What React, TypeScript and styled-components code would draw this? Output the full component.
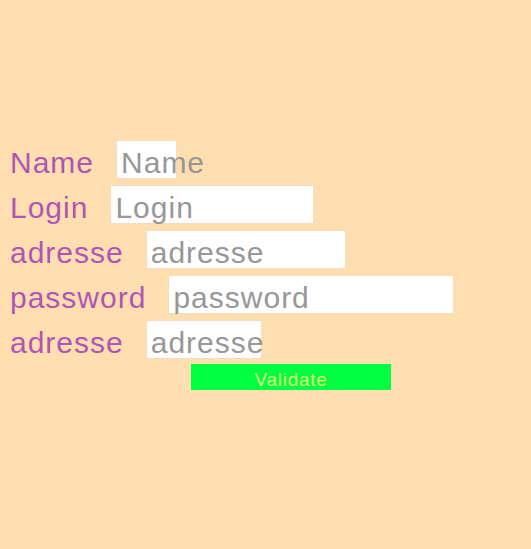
import React from "react";
import styled, { createGlobalStyle } from "styled-components";

const Global = createGlobalStyle`
  html, body {
    margin: 0;
    padding: 0;
    background: #ffdfb0;
    font-family: "Liberation Sans", Arial, sans-serif;
  }
`;

const Form = styled.form`
  display: flex;
  flex-direction: column;
  align-items: flex-start;
  gap: 6px;
  padding: 140px 0 0 10px;
  min-height: 549px;
  box-sizing: border-box;
`;

const Row = styled.div`
  display: flex;
  align-items: flex-start;
  gap: 22px;
`;

const Label = styled.label`
  padding-top: 8px;
  font-size: 30px;
  line-height: 30px;
  letter-spacing: 1px;
  color: #b054b6;
`;

const Field = styled.div<{ $w: number }>`
  width: ${(p) => p.$w}px;
  height: 39px;
  box-sizing: border-box;
  background: #ffffff;
  border: 1px solid #f3dcc0;
  border-radius: 2px;
  padding: 7px 3px 0 4px;
  font-size: 30px;
  line-height: 30px;
  letter-spacing: 1px;
  color: #979797;
  white-space: nowrap;
  overflow: visible;
`;

const Button = styled.button`
  display: block;
  box-sizing: border-box;
  margin: -1px 0 0 181px;
  width: 200px;
  height: 26px;
  border: none;
  padding: 6px 0 0;
  background: #00ff40;
  color: #dcff7a;
  font-family: "Liberation Sans", Arial, sans-serif;
  font-size: 19px;
  line-height: 20px;
  letter-spacing: 0.7px;
  text-align: center;
`;

const fields = [
  { label: "Name", w: 61 },
  { label: "Login", w: 204 },
  { label: "adresse", w: 200 },
  { label: "password", w: 286 },
  { label: "adresse", w: 116 },
];

export default function App() {
  return (
    <>
      <Global />
      <Form onSubmit={(e) => e.preventDefault()}>
        {fields.map((f, i) => (
          <Row key={i}>
            <Label>{f.label}</Label>
            <Field $w={f.w}>{f.label}</Field>
          </Row>
        ))}
        <Button type="submit">Validate</Button>
      </Form>
    </>
  );
}
